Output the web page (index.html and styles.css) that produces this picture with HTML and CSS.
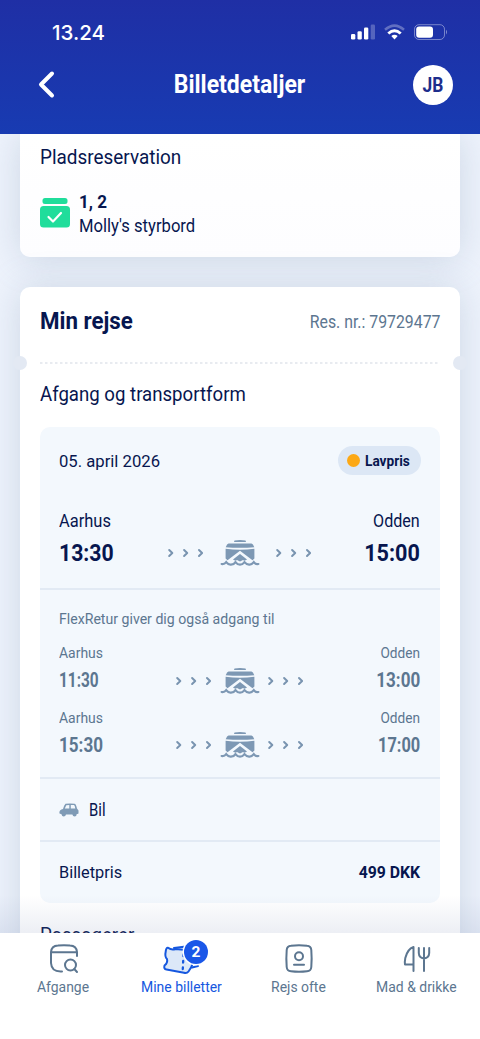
FILE: index.html
```html
<!DOCTYPE html>
<html lang="da">
<head>
<meta charset="utf-8">
<title>Billetdetaljer</title>
<link rel="stylesheet" href="styles.css">
</head>
<body>
<svg class="defs" width="0" height="0">
  <symbol id="ferry" viewBox="0 0 40 28">
    <path d="M14.500 1.600Q20 .2 25.500 1.600L26 2.900H14Z"/>
    <path d="M8.500 4.600H31.500Q33 4.800 34.300 8.200Q20 9.400 5.700 8.200Q7 4.800 8.500 4.600Z"/>
    <path d="M5.600 9.800Q20 11.600 34.400 9.800V19.500L32.500 21.300L20 11.700L7.500 21.300L5.600 19.500Z"/>
    <path d="M20 15L27 20.400Q24.800 22.300 23 20.900L20 22.600L17 20.900Q15 22.300 13 20.400Z"/>
    <path class="wave" d="M1.600 25Q4.300 25.600 6.200 23.100Q8.500 26 11 25.600Q14 25.500 15.500 23.100Q17.500 25.700 20 25.700Q22.500 25.700 24.500 23.100Q26.500 25.500 29 25.600Q31.500 26 33.800 23.100Q35.700 25.600 38.400 25"/>
  </symbol>
  <symbol id="steps" viewBox="0 0 37 10">
    <path d="M2.200 2L5.300 5L2.200 8M17.100 2L20.200 5L17.100 8M32 2L35.100 5L32 8"/>
  </symbol>
</svg>
<div class="app">
  <header class="header">
    <div class="status">
      <span class="clock">13.24</span>
      <svg class="indicators" width="98" height="18" viewBox="0 0 98 18">
        <g fill="#fff"><rect x="1" y="10" width="4.300" height="5.500" rx="1.300"/><rect x="7.500" y="7.300" width="4.300" height="8.200" rx="1.300"/><rect x="14" y="3.500" width="4.300" height="12" rx="1.300"/><rect x="20.700" y="0.500" width="4.300" height="15" rx="1.300" opacity=".25"/></g>
        <g fill="none" stroke="#fff" stroke-width="2.500"><path opacity=".3" d="M35 5.800Q44.500-2.500 54 5.800"/><path stroke-width="3" d="M38.300 9.500Q44.500 4 50.700 9.500"/></g>
        <path fill="#fff" d="M41.300 12Q44.500 9.300 47.700 12L44.500 15.500Z"/>
        <rect x="64.500" y="0.700" width="30" height="14.800" rx="4.500" fill="none" stroke="#fff" stroke-opacity=".4"/>
        <rect x="66.200" y="2.400" width="16.800" height="11.300" rx="3" fill="#fff"/>
        <path fill="#fff" opacity=".45" d="M96 5.800Q98 8 96 10.500Z"/>
      </svg>
    </div>
    <div class="titlebar">
      <svg class="back" width="20" height="30" viewBox="0 0 20 30"><path d="M15 3.500L4 14.500L15 25.500"/></svg>
      <h1 class="title">Billetdetaljer</h1>
      <div class="avatar"><span>JB</span></div>
    </div>
  </header>

  <main class="content">
    <section class="card seats">
      <h2 class="heading h-seats">Pladsreservation</h2>
      <div class="seat-row">
        <svg width="30" height="30" viewBox="0 0 30 30"><rect x="2.500" y="0" width="25" height="6" rx="2.500" fill="#20dd9b"/><rect x="0" y="8" width="30" height="21.500" rx="3.500" fill="#20dd9b"/><path d="M8.500 19L13 23.500L21 15" fill="none" stroke="#fff" stroke-width="2.200" stroke-linecap="round" stroke-linejoin="round"/></svg>
        <div class="seat-text"><span class="seat-no">1, 2</span><span class="seat-place">Molly's styrbord</span></div>
      </div>
    </section>

    <section class="card trip">
      <div class="trip-head"><h2 class="trip-title">Min rejse</h2><span class="res">Res. nr.: 79729477</span></div>
      <div class="tear"><svg width="400" height="2"><path d="M0 1H400" stroke="#e1e5ec" stroke-width="1.500" stroke-dasharray="2.500 2.500"/></svg></div>
      <h3 class="heading h-depart">Afgang og transportform</h3>
      <div class="ticket">
        <div class="block main-trip">
          <div class="row date-row"><span class="date">05. april 2026</span><span class="badge"><i></i><b>Lavpris</b></span></div>
          <div class="row places"><span class="l aarhus">Aarhus</span><span class="r odden">Odden</span></div>
          <div class="row times"><b class="l t1330">13:30</b><span class="route"><svg class="steps"><use href="#steps"/></svg><svg class="ferry"><use href="#ferry"/></svg><svg class="steps"><use href="#steps"/></svg></span><b class="r t1500">15:00</b></div>
        </div>
        <div class="block flex-trips">
          <p class="note">FlexRetur giver dig også adgang til</p>
          <div class="alt">
            <div class="row places"><span class="l aarhus">Aarhus</span><span class="r odden">Odden</span></div>
            <div class="row times"><b class="l t1130">11:30</b><span class="route"><svg class="steps"><use href="#steps"/></svg><svg class="ferry"><use href="#ferry"/></svg><svg class="steps"><use href="#steps"/></svg></span><b class="r t1300">13:00</b></div>
          </div>
          <div class="alt">
            <div class="row places"><span class="l aarhus">Aarhus</span><span class="r odden">Odden</span></div>
            <div class="row times"><b class="l t1530">15:30</b><span class="route"><svg class="steps"><use href="#steps"/></svg><svg class="ferry"><use href="#ferry"/></svg><svg class="steps"><use href="#steps"/></svg></span><b class="r t1700">17:00</b></div>
          </div>
        </div>
        <div class="block car-row">
          <svg width="20" height="14" viewBox="0 0 20 14"><path fill="#7f9bb6" fill-rule="evenodd" d="M6.500 .8Q11 0 15.500 .8Q17 1 18 5.500L19.500 7.500V10.500L18.500 11H17.800Q17.500 13.500 15.600 13.500T13.400 11.500H7Q6.500 13.500 4.700 13.500T2.500 11.300L.5 10.500Q-.2 6.800 4 6Q5 2 6.500 .8ZM7.300 2.200L5.800 5.600H10.300V1.900ZM11.800 1.900V5.600H16.300Q15.800 2.500 15 2.100Z"/></svg>
          <span class="bil">Bil</span>
        </div>
        <div class="block row price-row"><span class="l price-label">Billetpris</span><b class="r price">499 DKK</b></div>
      </div>
      <h3 class="heading h-pass">Passagerer</h3>
    </section>
    <div class="fade"></div>
  </main>

  <nav class="nav">
    <a class="tab"><svg width="44" height="36" viewBox="0 0 44 36"><g class="line"><path d="M20 31.500H18.500Q9.500 31.500 9 23V12Q9.500 5.800 16 5.500Q22 4.800 28 5.500Q34.500 5.800 35 12V16M9.300 12.300H34.800"/><circle cx="28.500" cy="25" r="5.500"/><path d="M32.300 29L35 32"/></g></svg><span class="lab afgange">Afgange</span></a>
    <a class="tab active"><svg width="48" height="36" viewBox="0 0 48 36"><g class="line"><path d="M17 8L27 6.800L29 9M35 27.500L41 26"/><path fill="#dce8f8" d="M11 7.800Q14.500 10.300 18.500 9L35 10.500L35.500 24Q34.500 27.500 31.500 31.500Q30 33.500 27 32.800L9.500 29.500Q6.500 29 7.500 25.500Q11 22.800 10 19Q7.500 17 8.800 11Q9.200 7.500 11 7.800Z"/><path stroke-width="2.300" stroke-dasharray="1.500 5" d="M26.500 14.500L25.800 29"/></g></svg><i class="count">2</i><span class="lab mine">Mine billetter</span></a>
    <a class="tab"><svg width="44" height="36" viewBox="0 0 44 36"><g class="line"><path d="M14 5.800Q22 4.500 30 5.800Q34 6 34.300 10Q35 18.500 34.300 27Q34 31 30 31.300Q22 32.300 14 31.300Q10 31 9.700 27Q9 18.500 9.700 10Q10 6 14 5.800Z"/><circle cx="22" cy="16.200" r="4"/><path d="M17 24.800H27"/></g></svg><span class="lab rejs">Rejs ofte</span></a>
    <a class="tab"><svg width="44" height="36" viewBox="0 0 44 36"><g class="line"><path d="M19.500 31V7Q13.500 9 11.300 18Q10.500 22.500 11 24.500H19.500M30 31V8M24.800 8V13Q25 18 30 18.500Q35 18 35.200 13V8"/></g></svg><span class="lab mad">Mad &amp; drikke</span></a>
  </nav>
</div>
</body>
</html>
```
FILE: styles.css
```css
* { box-sizing: border-box; }
body { margin: 0; font-family: Roboto, "Liberation Sans", sans-serif; color: #07164f; background: #fff; }
h1, h2, h3, p { margin: 0; }
svg { display: block; flex: none; }
.defs { display: none; }
.app { width: 480px; height: 1039px; display: flex; flex-direction: column; overflow: hidden; }

/* Header */
.header { height: 134px; flex: none; background: linear-gradient(#1f2fa5, #183bb2); color: #fff; padding-top: 17px; }
.status { height: 32px; display: flex; align-items: center; justify-content: space-between; padding: 0 32px 0 52px; }
.clock { font: 500 20.500px/32px Inter, Roboto, sans-serif; }
.titlebar { height: 72px; display: grid; grid-template-columns: 40px 1fr 40px; align-items: center; padding: 0 27px 0 37px; }
.back path { fill: none; stroke: #fff; stroke-width: 4; stroke-linecap: round; stroke-linejoin: round; }
.title { font-size: 25px; font-weight: 700; line-height: 32px; text-align: center; white-space: nowrap; transform: scaleX(.92); padding-right: 12px; }
.avatar { width: 40px; height: 40px; border-radius: 50%; background: #fff; color: #1d2d8c; font-size: 20px; font-weight: 700; line-height: 40px; text-align: center; }
.avatar span { display: inline-block; transform: scaleX(.87); }

/* Scrolling content */
.content { flex: 1; min-height: 0; position: relative; overflow: hidden; padding: 0 20px; background: #eef3fc; }
.card { background: #fff; box-shadow: 0 2px 36px rgba(125, 148, 175, .3); }
.seats { height: 123px; border-radius: 0 0 10px 10px; padding: 12px 20px 0; background: linear-gradient(#fff, #fdfdff); }
.heading { font-weight: 400; font-size: 19.500px; line-height: 24px; white-space: nowrap; transform-origin: left; }
.h-seats { transform: scaleX(.97); }
.seat-row { display: flex; gap: 9px; margin-top: 20px; align-items: flex-start; }
.seat-row svg { margin-top: 8px; }
.seat-text { display: flex; flex-direction: column; white-space: nowrap; }
.seat-text span { transform-origin: left; line-height: 24px; }
.seat-no { font-size: 18.500px; font-weight: 700; transform: scaleX(.92); }
.seat-place { font-size: 17.500px; transform: scaleX(.95); }
.trip { margin-top: 30px; height: 720px; border-radius: 10px; padding: 0 20px; position: relative; }
.trip-head { height: 70px; display: flex; justify-content: space-between; align-items: center; white-space: nowrap; }
.trip-title { font-size: 24.500px; line-height: 28px; margin-bottom: 2px; font-weight: 700; transform: scaleX(.91); transform-origin: left; }
.res { font-size: 17.500px; color: #5c7690; transform: scaleX(.905); transform-origin: right; }
.tear { height: 12px; display: flex; align-items: center; }
.tear::before, .tear::after { content: ""; position: absolute; top: 68.500px; width: 14px; height: 14px; border-radius: 50%; background: #e3e9f3; }
.tear::before { left: -7px; }
.tear::after { right: -7px; }
.h-depart { margin-top: 14px; transform: scaleX(.955); }
.ticket { margin-top: 20px; height: 476px; border-radius: 10px; background: #f3f8fd; }
.block { padding: 0 20px 0 19px; border-bottom: 2px solid #e2eaf4; }
.block:last-child { border: 0; }
.row { display: flex; justify-content: space-between; align-items: center; white-space: nowrap; }
.l { transform-origin: left; }
.r { transform-origin: right; }
.main-trip { height: 163px; padding-top: 18px; }
.date-row { height: 31px; }
.date { font-size: 17px; transform: scaleX(.98); transform-origin: left; }
.badge { width: 83px; height: 29px; border-radius: 15px; background: #dce7f5; display: flex; align-items: center; gap: 5px; padding-left: 9px; margin-right: -1px; }
.badge i { flex: none; width: 13px; height: 13px; border-radius: 50%; background: #fca815; }
.badge b { font-size: 15px; transform: scaleX(.91); transform-origin: left; }
.main-trip .places { height: 24px; margin-top: 33px; font-size: 17.500px; }
.main-trip .aarhus { transform: scaleX(.94); }
.main-trip .odden { transform: scaleX(.92); }
.main-trip .times { height: 40px; font-size: 24px; }
.times { position: relative; }
.route { position: absolute; left: 0; right: 0; top: 50%; height: 28px; margin-top: -14px; display: flex; justify-content: center; align-items: center; gap: 7.500px; }
.main-trip .route { gap: 15.500px; }
.steps { width: 37px; height: 10px; fill: none; stroke: #7994b0; stroke-width: 2; stroke-linecap: round; stroke-linejoin: round; }
.ferry { width: 40px; height: 28px; fill: #7d98b4; }
.wave { fill: none; stroke: #7d98b4; stroke-width: 2.200; stroke-linecap: round; }
.t1330 { transform: scaleX(.885); }
.t1500 { transform: scaleX(.9); }
.flex-trips { height: 189px; padding-top: 18px; color: #5c7690; }
.note { height: 22px; line-height: 22px; font-size: 15.500px; white-space: nowrap; transform: scaleX(.91); transform-origin: left; }
.alt { height: 64.500px; padding-top: 13px; }
.alt .places { height: 20px; font-size: 15.500px; }
.alt .aarhus { transform: scaleX(.9); }
.alt .odden { transform: scaleX(.88); }
.alt .times { height: 35px; font-size: 19.500px; }
.t1130 { transform: scaleX(.79); }
.t1300, .t1530 { transform: scaleX(.875); }
.t1700 { transform: scaleX(.84); }
.car-row { height: 63px; display: flex; align-items: center; gap: 10px; }
.bil { font-size: 17.500px; transform: scaleX(.85); transform-origin: left; }
.price-row { height: 60px; font-size: 17px; }
.price-label { transform: scaleX(.96); }
.price { transform: scaleX(.93); }
.h-pass { margin-top: 21px; transform: scaleX(.96); }
.fade { position: absolute; left: 0; right: 0; bottom: 0; height: 38px; background: linear-gradient(rgba(125, 140, 180, 0), rgba(125, 140, 180, .14)); }

/* Bottom tabs */
.nav { height: 106px; flex: none; display: grid; grid-template-columns: 127px 108px 127px 108px; background: #fff; color: #5c7690; position: relative; padding-right: 10px; }
.tab { position: relative; display: flex; flex-direction: column; align-items: center; padding-top: 7px; }
.line { fill: none; stroke: currentColor; stroke-width: 2; stroke-linecap: round; stroke-linejoin: round; }
.active { color: #1557df; }
.count { position: absolute; left: 57px; top: 7px; width: 24px; height: 24px; border-radius: 50%; background: #1a57e8; box-shadow: 0 0 0 1.500px #fff; color: #fff; font: 700 15.500px/24px Roboto, sans-serif; text-align: center; }
.lab { font-size: 15px; line-height: 22px; white-space: nowrap; transform: scaleX(.93); }
```
